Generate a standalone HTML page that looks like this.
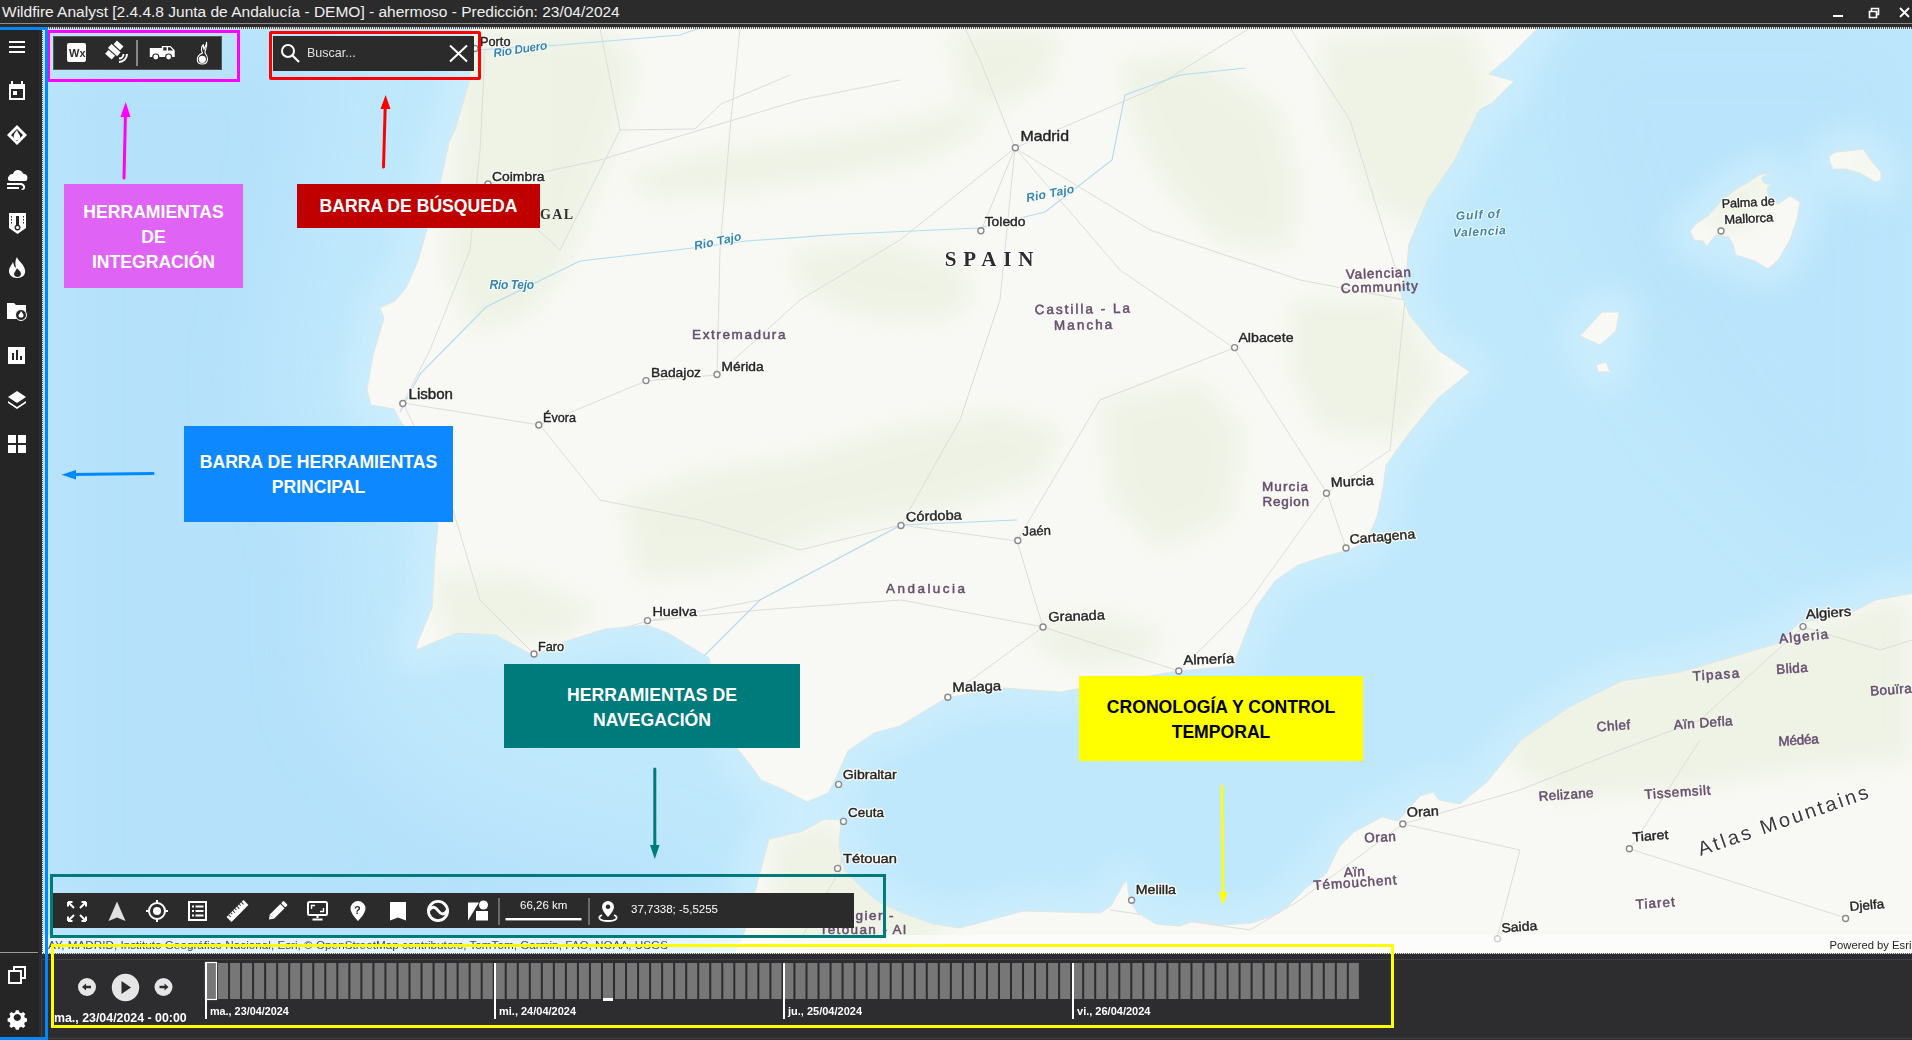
<!DOCTYPE html>
<html><head><meta charset="utf-8">
<style>
*{margin:0;padding:0;box-sizing:border-box}
html,body{width:1912px;height:1040px;overflow:hidden;background:#2b2b2b;font-family:"Liberation Sans",sans-serif}
.abs{position:absolute}
#title{left:0;top:0;width:1912px;height:23px;background:#2b2b2b;color:#f0f0f0;font-size:15.5px;line-height:23px;padding-left:2px;white-space:nowrap}
#tline{left:0;top:23px;width:1912px;height:1px;background:#8c8c8c}
#map{left:42px;top:28px;width:1870px;height:926px;overflow:hidden;background:#bfe8fc}
svg text{font-family:"Liberation Sans",sans-serif}
.lbl{fill:#252525;font-size:13px;stroke:#252525;stroke-width:0.4px;stroke-linejoin:round}
.lblh{fill:#fbfbf8;font-size:13px;stroke:#fbfbf8;stroke-width:2.8px;stroke-linejoin:round}
.reg{fill:#664f6d;font-size:13.5px;stroke:#664f6d;stroke-width:0.5px;stroke-linejoin:round}
.riv{fill:#3a85b0;font-size:12px;font-style:italic;font-weight:bold;stroke:#f5fbfd;stroke-width:2px;paint-order:stroke;stroke-linejoin:round}
.dot{fill:#fff;stroke:#8a8a8a;stroke-width:1.4}
.bx{position:absolute;color:#fff;font-weight:bold;font-size:17.6px;text-align:center;line-height:25px}
</style></head><body>
<div id="title" class="abs">Wildfire Analyst [2.4.4.8 Junta de Andalucía - DEMO] - ahermoso - Predicción: 23/04/2024</div>
<div id="tline" class="abs"></div>

<div id="map" class="abs">
<svg width="1870" height="926" viewBox="42 28 1870 926">
<defs>
<filter id="bl" x="-20%" y="-20%" width="140%" height="140%"><feGaussianBlur stdDeviation="16"/></filter>
<filter id="bl4" x="-30%" y="-30%" width="160%" height="160%"><feGaussianBlur stdDeviation="40"/></filter>
<filter id="bl3" x="-30%" y="-30%" width="160%" height="160%"><feGaussianBlur stdDeviation="12"/></filter>
<filter id="bl2" x="-20%" y="-20%" width="140%" height="140%"><feGaussianBlur stdDeviation="6"/></filter>
<clipPath id="landclip"><use href="#iberia"/><use href="#africa"/><use href="#mallorca"/><use href="#menorca"/><use href="#ibiza"/></clipPath>
</defs>
<g filter="url(#bl4)" fill="#b0defa" opacity="0.7">
<path d="M42,28 L330,28 300,200 260,400 330,520 330,700 420,800 560,850 680,870 700,954 42,954 Z"/>
<path d="M1560,28 L1912,28 1912,560 1820,540 1700,420 1600,260 1560,140 Z" opacity="0.5"/>
</g>
<g id="shelf" fill="#cdeefd" stroke="#cdeefd" stroke-width="44" stroke-linejoin="round" filter="url(#bl)" opacity="0.85">
<use href="#iberia"/><use href="#africa"/><use href="#mallorca"/><use href="#menorca"/><use href="#ibiza"/>
</g>
<g id="land" fill="#f8f9f4" stroke="#dfe6e4" stroke-width="1">
<path id="iberia" d="M472,20 L470,79 455,130 449,142 441,180 427,229 418,261 406,288 395,301 380,308 384,318 373,355 367,390 371,405 394,409 402,424 420,440 438,525 435,555 432,608 417,644 416,650 442,639 458,633 496,635 534,656 567,641 605,629 647,625 668,633 709,658 720,700 737,748 751,766 761,780 782,789 807,802 828,793 834,782 848,751 874,733 900,726 946,698 1004,688 1061,692 1119,681 1179,671 1233,666 1247,630 1256,607 1275,581 1298,565 1326,556 1349,550 1366,542 1377,517 1383,488 1386,465 1410,432 1438,398 1470,372 1438,350 1410,316 1400,292 1406,276 1409,244 1428,199 1454,161 1479,110 1492,103 1514,81 1489,74 1508,58 1537,29 1545,20 Z"/>
<path id="africa" d="M730,960 L743,937 756,888 769,839 779,837 803,831 824,819 841,820 839,846 845,871 862,888 877,901 902,913 934,924 960,928 1023,911 1100,913 1111,906 1124,883 1127,881 1130,902 1138,913 1156,924 1179,926 1194,921 1222,925 1251,923 1270,917 1288,906 1307,887 1326,874 1339,847 1354,832 1367,825 1382,817 1398,821 1420,796 1433,792 1439,800 1460,804 1487,782 1521,740 1571,706 1622,681 1681,672 1732,657 1779,643 1800,622 1842,617 1876,600 1920,592 1920,960 Z"/>
<path id="mallorca" d="M1690,231 L1694,240 1703,241 1707,247 1710,242 1716,235 1729,237 1733,245 1736,255 1755,261 1768,269 1778,260 1790,240 1797,219 1800,202 1790,196 1778,204 1769,198 1767,188 1771,185 1764,183 1761,178 1771,173 1759,175 1749,182 1738,188 1723,199 1709,215 1696,224 Z"/>
<path id="menorca" d="M1829,156 L1836,152 1856,150 1863,149 1872,162 1881,172 1881,180 1875,182 1860,173 1846,169 1833,169 1830,162 Z"/>
<path id="ibiza" d="M1580,336 L1602,312 1619,312 1616,331 1600,345 Z M1596,365 L1606,362 1610,372 1598,372 Z"/>
</g>


<g id="terrain" clip-path="url(#landclip)">
<g fill="#dfe9cf" opacity="0.38" filter="url(#bl3)">
<path d="M455,28 L610,28 640,70 615,140 590,210 560,280 520,320 470,330 445,260 455,150 Z"/>
<path d="M625,175 L700,152 800,140 900,122 965,105 990,125 930,160 820,182 720,195 650,200 Z"/>
<path d="M790,250 L880,240 960,262 975,300 940,322 860,318 800,290 Z"/>
<path d="M950,28 L1060,28 1050,80 1000,110 960,95 Z"/>
<path d="M1120,60 L1200,55 1280,110 1300,190 1290,250 1220,245 1160,180 1130,120 Z"/>
<path d="M1320,40 L1470,28 1490,90 1460,190 1420,230 1370,200 1330,120 Z"/>
<path d="M620,500 L700,470 800,455 900,425 1000,410 1065,430 1040,480 950,510 830,530 740,570 640,580 Z"/>
<path d="M1100,400 L1200,380 1245,430 1230,520 1160,550 1110,500 Z"/>
<path d="M1035,622 L1100,615 1160,630 1150,660 1080,668 1040,650 Z"/>
<path d="M1290,300 L1400,300 1440,380 1400,440 1320,430 1290,370 Z"/>
<path d="M430,575 L520,575 600,610 560,640 450,645 Z"/>
<path d="M770,840 L830,820 880,880 960,930 900,950 780,950 Z"/>
<path d="M1500,700 L1640,670 1780,640 1880,600 1912,600 1912,760 1800,770 1680,790 1560,800 1510,760 Z"/>
<path d="M1700,200 L1740,180 1770,175 1760,215 1720,235 Z"/>
<path d="M1860,148 L1881,172 1850,165 Z"/>
</g>
</g>
<g id="roads" fill="none" stroke="#dcdcda" stroke-width="1" clip-path="url(#landclip)">
<path d="M1015,148 L981,231 M1015,148 L900,240 800,300 717,375 646,381 540,425 403,403 M1015,148 L1000,300 960,420 901,525 760,600 648,621 M1015,148 L1150,230 1300,280 1405,300 M1015,148 L1120,270 1234,348 1327,493 1346,548 M1015,148 L980,60 965,28 M1015,148 L1150,90 1250,28 M485,50 L480,150 470,250 430,350 403,403 M403,403 L450,500 480,600 534,654 M534,654 L648,621 M648,621 L760,610 901,600 1043,627 1179,671 M1043,627 L948,697 M901,525 L1017,541 1043,627 M1405,300 L1390,450 1327,493 M488,184 L600,160 700,130 800,100 900,80 M717,375 L720,250 730,130 740,28 M620,130 L695,129 721,104 790,75 M540,425 L600,500 700,520 800,550 901,525 M1234,348 L1100,400 1017,541 M1179,671 L1250,600 1327,493 M846,820 L840,870 800,940 M1403,824 L1520,790 1620,750 1700,720 1803,627 M1630,849 L1700,740 M1497,938 L1520,850 1403,824 M1630,849 L1846,918 M1300,900 L1403,824 M1110,910 L1250,930 1300,900 M1803,627 L1880,650 1912,640 M1290,28 L1350,120 1405,300 M600,28 L620,130 560,250 488,184"/>
</g>
<g id="rivers" fill="none" stroke="#b3dcf0" stroke-width="1.2" clip-path="url(#landclip)">
<path d="M400,412 L420,374 486,307 580,261 693,248 746,241 846,234 979,228 1045,212 1112,160 1125,95 1180,75 1245,68 M476,50 L560,45 680,35 700,28 M700,660 L760,600 901,525 1017,520"/>
</g>
<!-- labels -->
<g>
<text class="lblh" x="480" y="45.8" textLength="30.5" lengthAdjust="spacingAndGlyphs" style="font-size:13px">Porto</text>
<text class="lblh" x="492" y="181" textLength="52.5" lengthAdjust="spacingAndGlyphs" style="font-size:13.5px">Coimbra</text>
<text class="lblh" x="1020.4" y="141.3" textLength="48.6" lengthAdjust="spacingAndGlyphs" style="font-size:14.5px">Madrid</text>
<text class="lblh" x="984.7" y="226" textLength="40.8" lengthAdjust="spacingAndGlyphs" style="font-size:13px">Toledo</text>
<text class="lblh" x="1238.4" y="342" textLength="55.2" lengthAdjust="spacingAndGlyphs" style="font-size:13.5px">Albacete</text>
<text class="lblh" x="651" y="377" textLength="50.0" lengthAdjust="spacingAndGlyphs" style="font-size:13.5px">Badajoz</text>
<text class="lblh" x="721.5" y="370.5" textLength="42.1" lengthAdjust="spacingAndGlyphs" style="font-size:13px">Mérida</text>
<text class="lblh" x="408.5" y="399" textLength="44.5" lengthAdjust="spacingAndGlyphs" style="font-size:14px">Lisbon</text>
<text class="lblh" x="543" y="421.6" textLength="33.0" lengthAdjust="spacingAndGlyphs" style="font-size:13px">Évora</text>
<text class="lblh" x="652.5" y="616" textLength="44.5" lengthAdjust="spacingAndGlyphs" style="font-size:13.5px">Huelva</text>
<text class="lblh" x="538" y="651" textLength="26.0" lengthAdjust="spacingAndGlyphs" style="font-size:13px">Faro</text>
<text class="lblh" x="906" y="521.4" textLength="56.0" lengthAdjust="spacingAndGlyphs" style="font-size:13.5px" transform="rotate(-2 906 521.4)">Córdoba</text>
<text class="lblh" x="1022.6" y="535.7" textLength="28.4" lengthAdjust="spacingAndGlyphs" style="font-size:13px" transform="rotate(-2 1022.6 535.7)">Jaén</text>
<text class="lblh" x="1048.6" y="621.5" textLength="56.4" lengthAdjust="spacingAndGlyphs" style="font-size:13.5px" transform="rotate(-2 1048.6 621.5)">Granada</text>
<text class="lblh" x="1183.6" y="664.7" textLength="50.8" lengthAdjust="spacingAndGlyphs" style="font-size:13.5px" transform="rotate(-2 1183.6 664.7)">Almería</text>
<text class="lblh" x="952.6" y="692" textLength="48.8" lengthAdjust="spacingAndGlyphs" style="font-size:13.5px" transform="rotate(-2 952.6 692)">Malaga</text>
<text class="lblh" x="1331" y="487" textLength="43.0" lengthAdjust="spacingAndGlyphs" style="font-size:13.5px" transform="rotate(-3 1331 487)">Murcia</text>
<text class="lblh" x="1350" y="544" textLength="65.7" lengthAdjust="spacingAndGlyphs" style="font-size:13.5px" transform="rotate(-5 1350 544)">Cartagena</text>
<text class="lblh" x="842.8" y="779" textLength="54.0" lengthAdjust="spacingAndGlyphs" style="font-size:13.5px">Gibraltar</text>
<text class="lblh" x="848" y="817" textLength="36.0" lengthAdjust="spacingAndGlyphs" style="font-size:13.5px">Ceuta</text>
<text class="lblh" x="843" y="862.7" textLength="54.0" lengthAdjust="spacingAndGlyphs" style="font-size:13.5px">Tétouan</text>
<text class="lblh" x="1135.8" y="894" textLength="40.2" lengthAdjust="spacingAndGlyphs" style="font-size:13px">Melilla</text>
<text class="lblh" x="1407" y="817" textLength="32.0" lengthAdjust="spacingAndGlyphs" style="font-size:13.5px" transform="rotate(-3 1407 817)">Oran</text>
<text class="lblh" x="1806" y="619" textLength="45.5" lengthAdjust="spacingAndGlyphs" style="font-size:13.5px" transform="rotate(-4 1806 619)">Algiers</text>
<text class="lblh" x="1632.8" y="841.5" textLength="36.0" lengthAdjust="spacingAndGlyphs" style="font-size:13px" transform="rotate(-4 1632.8 841.5)">Tiaret</text>
<text class="lblh" x="1501.7" y="932.5" textLength="35.9" lengthAdjust="spacingAndGlyphs" style="font-size:13px" transform="rotate(-4 1501.7 932.5)">Saida</text>
<text class="lblh" x="1850" y="911" textLength="34.6" lengthAdjust="spacingAndGlyphs" style="font-size:13px" transform="rotate(-5 1850 911)">Djelfa</text>
<text class="lblh" x="1722" y="208" textLength="53.0" lengthAdjust="spacingAndGlyphs" style="font-size:12.5px" transform="rotate(-3 1722 208)">Palma de</text>
<text class="lblh" x="1724.5" y="224" textLength="49.1" lengthAdjust="spacingAndGlyphs" style="font-size:12.5px" transform="rotate(-3 1724.5 224)">Mallorca</text>
<text class="lbl" x="480" y="45.8" textLength="30.5" lengthAdjust="spacingAndGlyphs" style="font-size:13px">Porto</text>
<text class="lbl" x="492" y="181" textLength="52.5" lengthAdjust="spacingAndGlyphs" style="font-size:13.5px">Coimbra</text>
<text class="lbl" x="1020.4" y="141.3" textLength="48.6" lengthAdjust="spacingAndGlyphs" style="font-size:14.5px">Madrid</text>
<text class="lbl" x="984.7" y="226" textLength="40.8" lengthAdjust="spacingAndGlyphs" style="font-size:13px">Toledo</text>
<text class="lbl" x="1238.4" y="342" textLength="55.2" lengthAdjust="spacingAndGlyphs" style="font-size:13.5px">Albacete</text>
<text class="lbl" x="651" y="377" textLength="50.0" lengthAdjust="spacingAndGlyphs" style="font-size:13.5px">Badajoz</text>
<text class="lbl" x="721.5" y="370.5" textLength="42.1" lengthAdjust="spacingAndGlyphs" style="font-size:13px">Mérida</text>
<text class="lbl" x="408.5" y="399" textLength="44.5" lengthAdjust="spacingAndGlyphs" style="font-size:14px">Lisbon</text>
<text class="lbl" x="543" y="421.6" textLength="33.0" lengthAdjust="spacingAndGlyphs" style="font-size:13px">Évora</text>
<text class="lbl" x="652.5" y="616" textLength="44.5" lengthAdjust="spacingAndGlyphs" style="font-size:13.5px">Huelva</text>
<text class="lbl" x="538" y="651" textLength="26.0" lengthAdjust="spacingAndGlyphs" style="font-size:13px">Faro</text>
<text class="lbl" x="906" y="521.4" textLength="56.0" lengthAdjust="spacingAndGlyphs" style="font-size:13.5px" transform="rotate(-2 906 521.4)">Córdoba</text>
<text class="lbl" x="1022.6" y="535.7" textLength="28.4" lengthAdjust="spacingAndGlyphs" style="font-size:13px" transform="rotate(-2 1022.6 535.7)">Jaén</text>
<text class="lbl" x="1048.6" y="621.5" textLength="56.4" lengthAdjust="spacingAndGlyphs" style="font-size:13.5px" transform="rotate(-2 1048.6 621.5)">Granada</text>
<text class="lbl" x="1183.6" y="664.7" textLength="50.8" lengthAdjust="spacingAndGlyphs" style="font-size:13.5px" transform="rotate(-2 1183.6 664.7)">Almería</text>
<text class="lbl" x="952.6" y="692" textLength="48.8" lengthAdjust="spacingAndGlyphs" style="font-size:13.5px" transform="rotate(-2 952.6 692)">Malaga</text>
<text class="lbl" x="1331" y="487" textLength="43.0" lengthAdjust="spacingAndGlyphs" style="font-size:13.5px" transform="rotate(-3 1331 487)">Murcia</text>
<text class="lbl" x="1350" y="544" textLength="65.7" lengthAdjust="spacingAndGlyphs" style="font-size:13.5px" transform="rotate(-5 1350 544)">Cartagena</text>
<text class="lbl" x="842.8" y="779" textLength="54.0" lengthAdjust="spacingAndGlyphs" style="font-size:13.5px">Gibraltar</text>
<text class="lbl" x="848" y="817" textLength="36.0" lengthAdjust="spacingAndGlyphs" style="font-size:13.5px">Ceuta</text>
<text class="lbl" x="843" y="862.7" textLength="54.0" lengthAdjust="spacingAndGlyphs" style="font-size:13.5px">Tétouan</text>
<text class="lbl" x="1135.8" y="894" textLength="40.2" lengthAdjust="spacingAndGlyphs" style="font-size:13px">Melilla</text>
<text class="lbl" x="1407" y="817" textLength="32.0" lengthAdjust="spacingAndGlyphs" style="font-size:13.5px" transform="rotate(-3 1407 817)">Oran</text>
<text class="lbl" x="1806" y="619" textLength="45.5" lengthAdjust="spacingAndGlyphs" style="font-size:13.5px" transform="rotate(-4 1806 619)">Algiers</text>
<text class="lbl" x="1632.8" y="841.5" textLength="36.0" lengthAdjust="spacingAndGlyphs" style="font-size:13px" transform="rotate(-4 1632.8 841.5)">Tiaret</text>
<text class="lbl" x="1501.7" y="932.5" textLength="35.9" lengthAdjust="spacingAndGlyphs" style="font-size:13px" transform="rotate(-4 1501.7 932.5)">Saida</text>
<text class="lbl" x="1850" y="911" textLength="34.6" lengthAdjust="spacingAndGlyphs" style="font-size:13px" transform="rotate(-5 1850 911)">Djelfa</text>
<text class="lbl" x="1722" y="208" textLength="53.0" lengthAdjust="spacingAndGlyphs" style="font-size:12.5px" transform="rotate(-3 1722 208)">Palma de</text>
<text class="lbl" x="1724.5" y="224" textLength="49.1" lengthAdjust="spacingAndGlyphs" style="font-size:12.5px" transform="rotate(-3 1724.5 224)">Mallorca</text>





























<text class="reg" x="692" y="339" textLength="93.5" lengthAdjust="spacing">Extremadura</text>
<text class="reg" x="1346" y="279" textLength="65.0" lengthAdjust="spacing" transform="rotate(-2 1346 279)">Valencian</text>
<text class="reg" x="1341" y="293" textLength="77.0" lengthAdjust="spacing" transform="rotate(-2 1341 293)">Community</text>
<text class="reg" x="1034.8" y="314.3" textLength="95.2" lengthAdjust="spacing" transform="rotate(-1 1034.8 314.3)">Castilla - La</text>
<text class="reg" x="1054" y="330" textLength="58.4" lengthAdjust="spacing" transform="rotate(-1 1054 330)">Mancha</text>
<text class="reg" x="1262" y="491" textLength="46.0" lengthAdjust="spacing">Murcia</text>
<text class="reg" x="1262.6" y="505.7" textLength="46.4" lengthAdjust="spacing">Region</text>
<text class="reg" x="886" y="593" textLength="79.0" lengthAdjust="spacing">Andalucia</text>
<text class="reg" x="1779.6" y="643.5" textLength="49.1" lengthAdjust="spacing" transform="rotate(-6 1779.6 643.5)">Algeria</text>
<text class="reg" x="1693" y="680.7" textLength="46.5" lengthAdjust="spacing" transform="rotate(-4 1693 680.7)">Tipasa</text>
<text class="reg" x="1776.6" y="674" textLength="31.4" lengthAdjust="spacing" transform="rotate(-4 1776.6 674)">Blida</text>
<text class="reg" x="1870.5" y="695.6" textLength="41.5" lengthAdjust="spacing" transform="rotate(-4 1870.5 695.6)">Bouïra</text>
<text class="reg" x="1597" y="731.5" textLength="33.7" lengthAdjust="spacing" transform="rotate(-4 1597 731.5)">Chlef</text>
<text class="reg" x="1674" y="729.4" textLength="59.0" lengthAdjust="spacing" transform="rotate(-4 1674 729.4)">Aïn Defla</text>
<text class="reg" x="1778.8" y="746" textLength="40.2" lengthAdjust="spacing" transform="rotate(-4 1778.8 746)">Médéa</text>
<text class="reg" x="1539" y="801" textLength="55.0" lengthAdjust="spacing" transform="rotate(-4 1539 801)">Relizane</text>
<text class="reg" x="1644.7" y="799" textLength="66.3" lengthAdjust="spacing" transform="rotate(-4 1644.7 799)">Tissemsilt</text>
<text class="reg" x="1364.5" y="842.5" textLength="31.5" lengthAdjust="spacing" transform="rotate(-3 1364.5 842.5)">Oran</text>
<text class="reg" x="1344" y="877" textLength="21.0" lengthAdjust="spacing" transform="rotate(-3 1344 877)">Aïn</text>
<text class="reg" x="1313.7" y="890" textLength="83.3" lengthAdjust="spacing" transform="rotate(-4 1313.7 890)">Témouchent</text>
<text class="reg" x="1636" y="909" textLength="39.0" lengthAdjust="spacing" transform="rotate(-4 1636 909)">Tiaret</text>
<text class="reg" x="855.5" y="919.8" textLength="38.1" lengthAdjust="spacing">gier -</text>
<text class="reg" x="819.6" y="933.5" textLength="86.4" lengthAdjust="spacing">Tetouan - Al</text>
<text class="riv" x="494" y="57.3" textLength="54.5" lengthAdjust="spacing" transform="rotate(-8.7 494 57.3)">Rio Duero</text>
<text class="riv" x="695" y="250" textLength="48.0" lengthAdjust="spacing" transform="rotate(-12 695 250)">Rio Tajo</text>
<text class="riv" x="489.6" y="289" textLength="44.4" lengthAdjust="spacing">Rio Tejo</text>
<text class="riv" x="1027" y="202" textLength="48.7" lengthAdjust="spacing" transform="rotate(-11 1027 202)">Rio Tajo</text>
<text class="riv" x="1456" y="220" textLength="44.0" lengthAdjust="spacing" transform="rotate(-3 1456 220)">Gulf of</text>
<text class="riv" x="1453" y="237" textLength="53.0" lengthAdjust="spacing" transform="rotate(-3 1453 237)">Valencia</text>
<text x="944.8" y="265.8" textLength="88.7" lengthAdjust="spacing" style="font-family:'Liberation Serif';font-size:21px;font-weight:bold;fill:#2e2a30;stroke:#fff;stroke-width:2px;paint-order:stroke">SPAIN</text>
<text x="540" y="219" textLength="33" lengthAdjust="spacing" style="font-family:'Liberation Serif';font-size:14px;font-weight:bold;fill:#333">GAL</text>
<text x="1700.5" y="856" textLength="179" lengthAdjust="spacing" transform="rotate(-19 1700.5 856)" style="font-size:20px;fill:#3a3a3a;stroke:#fff;stroke-width:2px;paint-order:stroke">Atlas Mountains</text>
</g>
<g class="dots"><circle class="dot" cx="475" cy="48.5" r="3"/><circle class="dot" cx="1015.3" cy="147.7" r="3"/><circle class="dot" cx="488" cy="184" r="3"/><circle class="dot" cx="980.9" cy="230.7" r="3"/><circle class="dot" cx="1234.6" cy="347.6" r="3"/><circle class="dot" cx="646" cy="380.6" r="3"/><circle class="dot" cx="717" cy="374.5" r="3"/><circle class="dot" cx="402.8" cy="403.5" r="3"/><circle class="dot" cx="538.8" cy="425" r="3"/><circle class="dot" cx="1326.5" cy="493.3" r="3"/><circle class="dot" cx="1346" cy="548" r="3"/><circle class="dot" cx="901" cy="525.5" r="3"/><circle class="dot" cx="1017.8" cy="540.5" r="3"/><circle class="dot" cx="1043" cy="627" r="3"/><circle class="dot" cx="647.5" cy="620.6" r="3"/><circle class="dot" cx="534" cy="654" r="3"/><circle class="dot" cx="1178.8" cy="671" r="3"/><circle class="dot" cx="947.8" cy="697.2" r="3"/><circle class="dot" cx="1803" cy="626.6" r="3"/><circle class="dot" cx="838.6" cy="784.4" r="3"/><circle class="dot" cx="843.5" cy="821.4" r="3"/><circle class="dot" cx="1402.8" cy="824" r="3"/><circle class="dot" cx="1629.4" cy="848.7" r="3"/><circle class="dot" cx="837.6" cy="868.4" r="3"/><circle class="dot" cx="1131.6" cy="900.3" r="3"/><circle class="dot" cx="1497.5" cy="938.8" r="3"/><circle class="dot" cx="1845.6" cy="918.5" r="3"/><circle class="dot" cx="1721" cy="231" r="3"/></g>
<!-- attribution strip -->
<rect x="42" y="935" width="1870" height="19" fill="#ffffff" fill-opacity="0.6"/>
<text x="48" y="948.5" textLength="620" lengthAdjust="spacingAndGlyphs" style="font-size:11.5px;fill:#4a4a4a">AY, MADRID, Instituto Geográfico Nacional, Esri, © OpenStreetMap contributors, TomTom, Garmin, FAO, NOAA, USGS</text>
<text x="1829.5" y="948.5" textLength="82" lengthAdjust="spacingAndGlyphs" style="font-size:11.5px;fill:#222">Powered by Esri</text>
</svg>
</div>


<!-- sidebar -->
<div class="abs" style="left:0;top:953px;width:1912px;height:87px;background:#2d2d30"></div>
<div class="abs" style="left:0;top:27px;width:39px;height:1013px;background:#252525"></div><div class="abs" style="left:39px;top:27px;width:3px;height:1013px;background:#2d2d30"></div>
<div class="abs" style="left:0;top:952px;width:38px;height:1px;background:#9a9a9a"></div>
<svg class="abs" style="left:0;top:0" width="48" height="1040" viewBox="0 0 48 1040" fill="#fff">
<!-- hamburger -->
<rect x="9" y="41" width="16" height="2"/><rect x="9" y="46" width="16" height="2"/><rect x="9" y="51" width="16" height="2"/>
<!-- calendar -->
<path d="M9,84 h16 v16 h-16 z M11,89 v9 h12 v-9 z" fill-rule="evenodd"/><rect x="11" y="81" width="2" height="4"/><rect x="21" y="81" width="2" height="4"/><rect x="13" y="91" width="4" height="4"/>
<!-- diamond fire -->
<path d="M17,125 L27,135 17,145 7,135 Z M17,129 L23,135 17,141 11,135 Z" fill-rule="evenodd"/>
<path d="M17,130 C15,133 13,135 14,138 C15,141 19,141 20,138 C21,135 18,134 17,130 Z"/>
<!-- cloud wind -->
<path d="M10,181 C8,181 7,178 9,176 C10,174 12,174 13,174 C14,170 18,169 21,171 C23,172 23,174 24,174 C27,174 28,177 27,180 L26,181 Z"/>
<rect x="7" y="183" width="15" height="2"/><rect x="7" y="187" width="12" height="2"/>
<path d="M20,183 C26,183 27,190 22,190 L21,189 C24,189 24,185 20,185 Z"/>
<!-- thermometer shield -->
<path d="M9,213 h17 v15 l-8.5,6 l-8.5,-6 z"/>
<path d="M16,216 h3 v9 a3,3 0 1 1 -3,0 z" fill="#252525"/><circle cx="17.5" cy="227.5" r="1.6" fill="#fff"/>
<rect x="11" y="216" width="1" height="1.5" fill="#252525"/><rect x="11" y="219" width="1" height="1.5" fill="#252525"/><rect x="11" y="222" width="1" height="1.5" fill="#252525"/><rect x="23" y="216" width="1" height="1.5" fill="#252525"/><rect x="23" y="219" width="1" height="1.5" fill="#252525"/><rect x="23" y="222" width="1" height="1.5" fill="#252525"/>
<!-- flame -->
<path d="M17,257 C18,261 24,264 25,270 C26,275 22,278 17,278 C12,278 9,275 9,271 C9,267 12,265 13,262 C14,265 14,267 16,268 C15,264 15,260 17,257 Z M17,268 C16,271 14,272 14,274 C14,276 16,277 17.5,277 C19,277 21,276 21,274 C21,271 18,270 17,268 Z" fill-rule="evenodd"/>
<!-- folder fire -->
<path d="M7,303 h7 l2,2 h10 v14 h-19 z"/>
<circle cx="21" cy="315" r="5.5" fill="#252525" stroke="#fff" stroke-width="1"/>
<path d="M21,311 C22,313 24,314 23.5,316 C23,318 19,318 18.5,316 C18.5,314 20,314 21,311 Z"/>
<!-- chart -->
<path d="M8,347 h17 v17 h-17 z" /><rect x="12" y="353" width="2" height="7" fill="#252525"/><rect x="16" y="350" width="2" height="10" fill="#252525"/><rect x="20" y="356" width="2" height="4" fill="#252525"/>
<!-- layers -->
<path d="M17,391 L26,397 17,403 8,397 Z"/>
<path d="M8,401 L17,407 26,401 26,403 17,409 8,403 Z"/>
<!-- grid -->
<rect x="8" y="435" width="8" height="8"/><rect x="18" y="435" width="8" height="8"/><rect x="8" y="445" width="8" height="8"/><rect x="18" y="445" width="8" height="8"/>
<!-- restore -->
<rect x="14" y="967" width="11" height="11" fill="none" stroke="#fff" stroke-width="2"/>
<rect x="9" y="971" width="12" height="12" fill="#252525" stroke="#fff" stroke-width="2"/>
<!-- gear -->
<g transform="translate(17.3,1017.5) scale(0.72)">
<path d="M-2,-10 h4 l1,3 2.5,1 2.8,-1.6 2.8,2.8 -1.6,2.8 1,2.5 3,1 v4 l-3,1 -1,2.5 1.6,2.8 -2.8,2.8 -2.8,-1.6 -2.5,1 -1,3 h-4 l-1,-3 -2.5,-1 -2.8,1.6 -2.8,-2.8 1.6,-2.8 -1,-2.5 -3,-1 v-4 l3,-1 1,-2.5 -1.6,-2.8 2.8,-2.8 2.8,1.6 2.5,-1 z M0,-5 a5,5 0 1 0 0.01,0 z" fill-rule="evenodd"/>
</g>
</svg>
<!-- blue outline main toolbar -->
<div class="abs" style="left:0;top:27px;width:48px;height:1013px;border:3px solid #0088ff;border-left:none;border-radius:0 3px 0 0;z-index:5"></div>

<!-- window controls -->
<svg class="abs" style="left:1820px;top:0" width="92" height="24" fill="none" stroke="#fff">
<rect x="13" y="15" width="10" height="2" fill="#fff" stroke="none"/>
<path d="M49.5,11.5 h7 v6 h-7 z M51.5,11.5 v-3 h7 v6 h-2" stroke-width="1.6"/>
<path d="M80,8 l9,9 M89,8 l-9,9" stroke-width="1.8"/>
</svg>

<!-- integration toolbar -->
<div class="abs" style="left:48px;top:30px;width:192px;height:52px;border:3px solid #ff00ff;border-left-width:2px"></div>
<div class="abs" style="left:53px;top:36px;width:169px;height:34px;background:#2b2b2b;border:1px solid #555"></div>
<svg class="abs" style="left:53px;top:36px" width="169" height="34">
<rect x="14" y="7" width="19" height="19" rx="2" fill="#fff"/>
<text x="16" y="21" style="font-family:'Liberation Sans';font-weight:bold;font-size:11px;fill:#2b2b2b">Wx</text>
<g fill="#fff" transform="translate(61.3,14.1) rotate(42)">
<rect x="-6.2" y="-2.6" width="12.4" height="5.2"/>
<rect x="-4.4" y="-8.8" width="8.8" height="5"/>
<rect x="-4.4" y="3.8" width="8.8" height="5"/>
</g>
<path d="M66,22.5 a4.5,4.5 0 0 0 4.5,-4.5 M66,26 a8,8 0 0 0 8,-8" stroke="#fff" stroke-width="2" fill="none"/>
<rect x="83" y="4" width="2" height="26" fill="#888"/>
<path d="M96.8,12 h12 v-2.1 h8.8 l4.1,4.3 v6.8 h-24.9 z" fill="#fff"/>
<path d="M110.3,11.2 h3.3 v3.3 h-3.3 z M115,11.2 h2.2 l2.8,3.3 h-5 z" fill="#2b2b2b"/>
<circle cx="102.8" cy="21" r="3" fill="#fff" stroke="#2b2b2b" stroke-width="1.2"/><circle cx="115.6" cy="21" r="3" fill="#fff" stroke="#2b2b2b" stroke-width="1.2"/>
<path d="M153.5,6 C154,9 151,11 151,14 C151,12 150,10 150.5,8.5 C148,11 148,14 149.5,17 C146,18.5 144.3,20.5 144.3,23.5 C144.3,26.5 146.5,28 149.3,28 C152.5,28 154.5,26.5 154.5,23 C154.5,20 153,18.5 152,17 C151.5,14 155,11 153.5,6 Z" fill="none" stroke="#fff" stroke-width="1.1"/>
<circle cx="149.3" cy="23.3" r="3.6" fill="#fff"/>
</svg>

<!-- search bar -->
<div class="abs" style="left:269px;top:31px;width:212px;height:49px;border:3px solid #ff0000;border-radius:2px"></div>
<div class="abs" style="left:273px;top:36px;width:201px;height:35px;background:#2b2b2b"></div>
<svg class="abs" style="left:273px;top:36px" width="201" height="35">
<circle cx="15" cy="15" r="6" fill="none" stroke="#fff" stroke-width="2"/>
<path d="M19.5,19.5 L26,26" stroke="#fff" stroke-width="2.2"/>
<path d="M177,9.5 l17,16 M194,9.5 l-17,16" stroke="#fff" stroke-width="2"/>
</svg>
<div class="abs" style="left:307px;top:46px;color:#e0e0e0;font-size:12.5px">Buscar...</div>

<!-- arrows -->
<svg class="abs" style="left:0;top:0" width="1912" height="1040">
<path d="M124,178 L125.5,112" stroke="#ff00ff" stroke-width="3" stroke-linecap="round"/>
<path d="M120.5,117 L125.7,102 130.5,117 Z" fill="#ff00ff"/>
<path d="M383.5,167 L385.3,104" stroke="#ff0000" stroke-width="3" stroke-linecap="round"/>
<path d="M380.5,109 L385.6,95 390.5,109 Z" fill="#ff0000"/>
<path d="M153,473.5 L72,474.5" stroke="#0088ff" stroke-width="3" stroke-linecap="round"/>
<path d="M76,470 L61.5,474.7 76,479.5 Z" fill="#0088ff"/>
<path d="M654.8,769 L654.8,848" stroke="#007b7b" stroke-width="3" stroke-linecap="round"/>
<path d="M650,845 L654.8,859 659.6,845 Z" fill="#007b7b"/>
<path d="M1222,786 L1223,895" stroke="#ffff00" stroke-width="2.5" stroke-linecap="round"/>
<path d="M1218.5,892 L1223,905 1227.5,892 Z" fill="#ffff00"/>
</svg>



<!-- nav toolbar -->
<div class="abs" style="left:50px;top:874px;width:836px;height:64px;border:3px solid #007b7b"></div>
<div class="abs" style="left:53px;top:893px;width:801px;height:35px;background:#2b2b2b"></div>
<svg class="abs" style="left:0;top:880px" width="900" height="60" viewBox="0 880 900 60" fill="#fff" stroke="none">
<!-- expand -->
<g stroke="#fff" stroke-width="2" fill="none">
<path d="M68,902 l6,6 M68,902 v4.5 M68,902 h4.5"/>
<path d="M86,902 l-6,6 M86,902 v4.5 M86,902 h-4.5"/>
<path d="M68,921 l6,-6 M68,921 v-4.5 M68,921 h4.5"/>
<path d="M86,921 l-6,-6 M86,921 v-4.5 M86,921 h-4.5"/>
</g>
<!-- nav arrow -->
<path d="M117,901.5 L125.5,921 117,917.5 108.5,921 Z" fill="#e0e0e0"/>
<!-- target -->
<circle cx="157" cy="911" r="8" fill="none" stroke="#fff" stroke-width="2"/><circle cx="157" cy="911" r="4" fill="#fff"/>
<path d="M157,900 v3 M157,919 v3 M146,911 h3 M165,911 h3" stroke="#fff" stroke-width="2"/>
<!-- list -->
<rect x="189" y="902" width="17" height="18" fill="none" stroke="#fff" stroke-width="2"/>
<rect x="192" y="905.5" width="2" height="2"/><rect x="195.5" y="905.5" width="8" height="2"/>
<rect x="192" y="910" width="2" height="2"/><rect x="195.5" y="910" width="8" height="2"/>
<rect x="192" y="914.5" width="2" height="2"/><rect x="195.5" y="914.5" width="8" height="2"/>
<!-- ruler -->
<g transform="translate(237.5,911) rotate(-45)"><rect x="-12" y="-3.5" width="24" height="7"/>
<path d="M-9,-3.5 v3 M-6,-3.5 v2 M-3,-3.5 v3 M0,-3.5 v2 M3,-3.5 v3 M6,-3.5 v2 M9,-3.5 v3" stroke="#2b2b2b" stroke-width="1"/></g>
<!-- pencil -->
<g transform="translate(277.5,911) rotate(-45)"><rect x="-8" y="-3" width="15" height="6"/><path d="M-8,-3 l-4,3 4,3 z"/><rect x="8" y="-3" width="3.5" height="6" rx="1"/></g>
<!-- monitor -->
<rect x="308" y="902" width="19" height="13" rx="1.5" fill="none" stroke="#fff" stroke-width="2"/>
<path d="M311.5,909 v-3.5 h3.5 M323.5,908 v3.5 h-3.5" stroke="#fff" stroke-width="1.4" fill="none"/>
<rect x="316.5" y="915" width="2" height="3"/><rect x="312.5" y="918.5" width="10" height="2"/>
<!-- pin question -->
<path d="M358,901 a7.5,7.5 0 0 1 7.5,7.5 c0,5 -7.5,12.5 -7.5,12.5 c0,0 -7.5,-7.5 -7.5,-12.5 a7.5,7.5 0 0 1 7.5,-7.5 z"/>
<text x="354" y="914" style="font-size:11px;font-weight:bold;fill:#2b2b2b">?</text>
<!-- bookmark -->
<path d="M390,902 h16 v18.5 l-8,-3 -8,3 z"/>
<!-- globe wave -->
<circle cx="438" cy="911" r="9.6" fill="none" stroke="#fff" stroke-width="2.8"/>
<path d="M428.5,911 c4,-6 7,-4 9.5,-0.5 c2.5,3.5 5.5,5.5 9.5,0" stroke="#fff" stroke-width="3" fill="none"/>
<!-- shapes -->
<path d="M468,902.5 h11 l-11,18 z"/><circle cx="483.5" cy="905" r="4.5"/><rect x="476" y="911" width="12" height="9.5"/>
<rect x="498.5" y="898" width="1" height="27" fill="#aaa"/>
<rect x="505.5" y="918" width="76" height="2.4"/>
<rect x="588.5" y="898" width="1" height="27" fill="#aaa"/>
<!-- location pin -->
<path d="M608,901 a6,6 0 0 1 6,6 c0,4 -6,10 -6,10 c0,0 -6,-6 -6,-10 a6,6 0 0 1 6,-6 z M608,904.5 a2.3,2.3 0 1 0 0.01,0 z" fill-rule="evenodd"/>
<path d="M602,915 c-5,2 -3,6 6,6 c9,0 11,-4 6,-6" fill="none" stroke="#fff" stroke-width="1.8"/>
</svg>
<div class="abs" style="left:520px;top:899px;color:#fff;font-size:11.5px">66,26 km</div>
<div class="abs" style="left:631px;top:903px;color:#fff;font-size:11.5px">37,7338; -5,5255</div>

<!-- dotted lines -->
<div class="abs" style="left:42px;top:27px;width:1870px;height:2px;background:repeating-linear-gradient(90deg,#e8e8e8 0 1px,#555 1px 2px);opacity:.9"></div>
<div class="abs" style="left:42px;top:953px;width:1870px;height:1px;background:repeating-linear-gradient(90deg,#e8e8e8 0 1px,#555 1px 2px)"></div>
<div class="abs" style="left:42px;top:28px;width:1px;height:925px;background:repeating-linear-gradient(180deg,#e8f4fa 0 1px,#555 1px 2px)"></div>

<!-- timeline panel -->
<div class="abs" style="left:41px;top:959px;width:1871px;height:1px;background:#3e3e44"></div><div class="abs" style="left:41px;top:959px;width:1px;height:80px;background:#3e3e44"></div>
<div class="abs" style="left:48px;top:1038px;width:1864px;height:1px;background:#3e3e44"></div>
<svg class="abs" style="left:0;top:950px" width="1912" height="90" viewBox="0 950 1912 90">
<g fill="#777777"><rect x="206.00" y="963" width="10" height="36"/><rect x="218.03" y="963" width="10" height="36"/><rect x="230.06" y="963" width="10" height="36"/><rect x="242.09" y="963" width="10" height="36"/><rect x="254.12" y="963" width="10" height="36"/><rect x="266.15" y="963" width="10" height="36"/><rect x="278.18" y="963" width="10" height="36"/><rect x="290.21" y="963" width="10" height="36"/><rect x="302.24" y="963" width="10" height="36"/><rect x="314.27" y="963" width="10" height="36"/><rect x="326.30" y="963" width="10" height="36"/><rect x="338.33" y="963" width="10" height="36"/><rect x="350.36" y="963" width="10" height="36"/><rect x="362.39" y="963" width="10" height="36"/><rect x="374.42" y="963" width="10" height="36"/><rect x="386.45" y="963" width="10" height="36"/><rect x="398.48" y="963" width="10" height="36"/><rect x="410.51" y="963" width="10" height="36"/><rect x="422.54" y="963" width="10" height="36"/><rect x="434.57" y="963" width="10" height="36"/><rect x="446.60" y="963" width="10" height="36"/><rect x="458.63" y="963" width="10" height="36"/><rect x="470.66" y="963" width="10" height="36"/><rect x="482.69" y="963" width="10" height="36"/><rect x="494.72" y="963" width="10" height="36"/><rect x="506.75" y="963" width="10" height="36"/><rect x="518.78" y="963" width="10" height="36"/><rect x="530.81" y="963" width="10" height="36"/><rect x="542.84" y="963" width="10" height="36"/><rect x="554.87" y="963" width="10" height="36"/><rect x="566.90" y="963" width="10" height="36"/><rect x="578.93" y="963" width="10" height="36"/><rect x="590.96" y="963" width="10" height="36"/><rect x="602.99" y="963" width="10" height="36"/><rect x="615.02" y="963" width="10" height="36"/><rect x="627.05" y="963" width="10" height="36"/><rect x="639.08" y="963" width="10" height="36"/><rect x="651.11" y="963" width="10" height="36"/><rect x="663.14" y="963" width="10" height="36"/><rect x="675.17" y="963" width="10" height="36"/><rect x="687.20" y="963" width="10" height="36"/><rect x="699.23" y="963" width="10" height="36"/><rect x="711.26" y="963" width="10" height="36"/><rect x="723.29" y="963" width="10" height="36"/><rect x="735.32" y="963" width="10" height="36"/><rect x="747.35" y="963" width="10" height="36"/><rect x="759.38" y="963" width="10" height="36"/><rect x="771.41" y="963" width="10" height="36"/><rect x="783.44" y="963" width="10" height="36"/><rect x="795.47" y="963" width="10" height="36"/><rect x="807.50" y="963" width="10" height="36"/><rect x="819.53" y="963" width="10" height="36"/><rect x="831.56" y="963" width="10" height="36"/><rect x="843.59" y="963" width="10" height="36"/><rect x="855.62" y="963" width="10" height="36"/><rect x="867.65" y="963" width="10" height="36"/><rect x="879.68" y="963" width="10" height="36"/><rect x="891.71" y="963" width="10" height="36"/><rect x="903.74" y="963" width="10" height="36"/><rect x="915.77" y="963" width="10" height="36"/><rect x="927.80" y="963" width="10" height="36"/><rect x="939.83" y="963" width="10" height="36"/><rect x="951.86" y="963" width="10" height="36"/><rect x="963.89" y="963" width="10" height="36"/><rect x="975.92" y="963" width="10" height="36"/><rect x="987.95" y="963" width="10" height="36"/><rect x="999.98" y="963" width="10" height="36"/><rect x="1012.01" y="963" width="10" height="36"/><rect x="1024.04" y="963" width="10" height="36"/><rect x="1036.07" y="963" width="10" height="36"/><rect x="1048.10" y="963" width="10" height="36"/><rect x="1060.13" y="963" width="10" height="36"/><rect x="1072.16" y="963" width="10" height="36"/><rect x="1084.19" y="963" width="10" height="36"/><rect x="1096.22" y="963" width="10" height="36"/><rect x="1108.25" y="963" width="10" height="36"/><rect x="1120.28" y="963" width="10" height="36"/><rect x="1132.31" y="963" width="10" height="36"/><rect x="1144.34" y="963" width="10" height="36"/><rect x="1156.37" y="963" width="10" height="36"/><rect x="1168.40" y="963" width="10" height="36"/><rect x="1180.43" y="963" width="10" height="36"/><rect x="1192.46" y="963" width="10" height="36"/><rect x="1204.49" y="963" width="10" height="36"/><rect x="1216.52" y="963" width="10" height="36"/><rect x="1228.55" y="963" width="10" height="36"/><rect x="1240.58" y="963" width="10" height="36"/><rect x="1252.61" y="963" width="10" height="36"/><rect x="1264.64" y="963" width="10" height="36"/><rect x="1276.67" y="963" width="10" height="36"/><rect x="1288.70" y="963" width="10" height="36"/><rect x="1300.73" y="963" width="10" height="36"/><rect x="1312.76" y="963" width="10" height="36"/><rect x="1324.79" y="963" width="10" height="36"/><rect x="1336.82" y="963" width="10" height="36"/><rect x="1348.85" y="963" width="10" height="36"/></g>
<rect x="205.5" y="962.5" width="11" height="37" fill="none" stroke="#fff" stroke-width="1.2"/>
<rect x="205" y="962" width="2" height="57" fill="#fff"/>
<rect x="494" y="963" width="2" height="56" fill="#fff"/>
<rect x="783" y="963" width="2" height="56" fill="#fff"/>
<rect x="1072" y="963" width="2" height="56" fill="#fff"/>
<rect x="603" y="998" width="10" height="3" fill="#fff"/>
<circle cx="87" cy="987" r="9" fill="#e6e6e6"/>
<path d="M82,987 l4,-3.5 v2.3 h5 v2.4 h-5 v2.3 z" fill="#2b2b2b"/>
<circle cx="125.5" cy="987.5" r="13.7" fill="#e6e6e6"/>
<path d="M121.5,981 L131,987.5 121.5,994 Z" fill="#2b2b2b"/>
<circle cx="163.5" cy="987" r="9" fill="#e6e6e6"/>
<path d="M168.5,987 l-4,-3.5 v2.3 h-5 v2.4 h5 v2.3 z" fill="#2b2b2b"/>
<text x="54" y="1022" textLength="132.7" lengthAdjust="spacingAndGlyphs" style="font-size:12.5px;font-weight:bold;fill:#fff">ma., 23/04/2024 - 00:00</text>
<text x="210" y="1015" textLength="78.7" lengthAdjust="spacingAndGlyphs" style="font-size:10.5px;font-weight:bold;fill:#fff">ma., 23/04/2024</text>
<text x="499" y="1015" textLength="77" lengthAdjust="spacingAndGlyphs" style="font-size:10.5px;font-weight:bold;fill:#fff">mi., 24/04/2024</text>
<text x="788" y="1015" textLength="74" lengthAdjust="spacingAndGlyphs" style="font-size:10.5px;font-weight:bold;fill:#fff">ju., 25/04/2024</text>
<text x="1077" y="1015" textLength="73.5" lengthAdjust="spacingAndGlyphs" style="font-size:10.5px;font-weight:bold;fill:#fff">vi., 26/04/2024</text>
</svg>
<div class="abs" style="left:51px;top:944px;width:1343px;height:84px;border:3px solid #ffff00"></div>

<!-- annotation boxes -->
<div class="bx" style="left:64px;top:184px;width:179px;height:104px;background:#df63f5;padding-top:16px">HERRAMIENTAS<br>DE<br>INTEGRACIÓN</div>
<div class="bx" style="left:297px;top:184px;width:243px;height:44px;background:#c00000;line-height:44px">BARRA DE BÚSQUEDA</div>
<div class="bx" style="left:184px;top:426px;width:269px;height:96px;background:#0d88fe;padding-top:23.5px">BARRA DE HERRAMIENTAS<br>PRINCIPAL</div>
<div class="bx" style="left:504px;top:664px;width:296px;height:84px;background:#007b7b;padding-top:18.5px">HERRAMIENTAS DE<br>NAVEGACIÓN</div>
<div class="bx" style="left:1079px;top:676px;width:284px;height:85px;background:#ffff00;color:#000;padding-top:19px">CRONOLOGÍA Y CONTROL<br>TEMPORAL</div>

</body></html>
